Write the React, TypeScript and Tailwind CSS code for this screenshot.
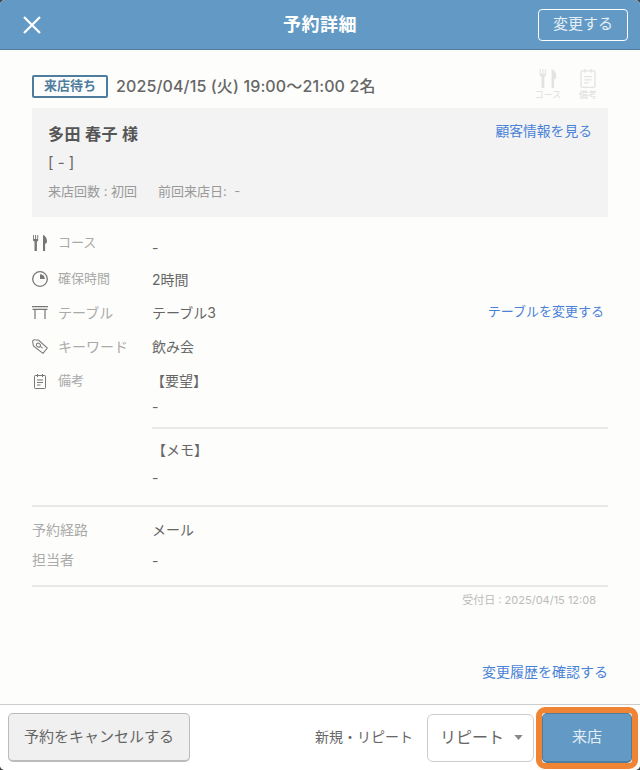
import React from 'react';

const FONT = "font-['Inter','Noto_Sans_CJK_JP',sans-serif]";

const ForkKnife: React.FC<{ className?: string }> = ({ className }) => (
  <svg viewBox="0 0 14 16" className={className} fill="currentColor">
    <path d="M0 0h.9v4h1.200V0h1v4h1.200V0h.9v4.800c0 1-.5 1.600-1.300 1.800V16H1.500V6.600C.6 6.400 0 5.800 0 4.800z" />
    <path d="M10 16V0c2.400.8 4 3 4 6.200 0 1.500-.6 2.300-1.900 2.500V16z" />
  </svg>
);

const Memo: React.FC<{ className?: string }> = ({ className }) => (
  <svg viewBox="0 0 12 15" className={className} fill="none" stroke="currentColor" strokeWidth="1">
    <rect x="0.500" y="1.500" width="11" height="13" rx="0.800" />
    <path d="M3.500 0v3M8.500 0v3M3 6h6M3 8.500h6M3 11h3.500" />
  </svg>
);

const Clock: React.FC = () => (
  <svg viewBox="0 0 16 16" className="w-4 h-4 text-[#777]">
    <circle cx="8" cy="8" r="7.300" fill="none" stroke="currentColor" strokeWidth="1.300" />
    <path d="M8 3.200A4.800 4.800 0 0 1 12.800 8H8z" fill="currentColor" />
  </svg>
);

const Table: React.FC = () => (
  <svg viewBox="0 0 16 13" className="w-4 h-[13px] text-[#777]" fill="none" stroke="currentColor" strokeWidth="1.200">
    <path d="M0 .7h16M.5 3.400h15M3 3.400V13M13 3.400V13" />
  </svg>
);

const Tag: React.FC = () => (
  <svg viewBox="0 0 17 16" className="w-4 h-[15px] text-[#777]" fill="none" stroke="currentColor" strokeWidth="1.100">
    <path d="M.7 3.200c-.2-1.400.8-2.500 2.200-2.300l4.200.5 9.200 8.300-4.600 5.600L1.500 7.400z" />
    <ellipse cx="6.800" cy="6.500" rx="2.300" ry="1.900" transform="rotate(35 6.800 6.500)" />
    <path d="M8.700 7.800l2.600 1.900" />
  </svg>
);

const Row: React.FC<{ icon?: React.ReactNode; label: string; labelClass?: string; className?: string; children: React.ReactNode }> = ({ icon, label, labelClass, className, children }) => (
  <div className={`flex items-center ${className || ''}`}>
    {icon && <div className="w-[26px] shrink-0 flex items-center justify-center pr-[10px]">{icon}</div>}
    <div className={`${icon ? 'w-[94px]' : 'w-[120px]'} shrink-0 text-[#aaa] ${labelClass || 'text-[13px]'}`}>{label}</div>
    <div className="flex-1 flex items-center justify-between text-[14px] text-[#666]">{children}</div>
  </div>
);

export default function App() {
  return (
    <div className={`w-[640px] h-[770px] bg-[#444] ${FONT}`}>
      <div className="w-full h-full rounded-[5px] overflow-hidden bg-[#fdfdfb] flex flex-col">
        <header className="h-[50px] shrink-0 bg-[#639ac5] border-b border-[#4f7d9f] flex items-center justify-between pl-[23px] pr-[12px] relative">
          <svg viewBox="0 0 18 18" className="w-[18px] h-[18px] text-white" fill="none" stroke="currentColor" strokeWidth="2.200">
            <path d="M1 1l16 16M17 1L1 17" />
          </svg>
          <h1 className="absolute left-0 right-0 text-center text-[18px] tracking-[0.5px] font-bold text-white pointer-events-none">予約詳細</h1>
          <button className="w-[90px] h-[32px] rounded-[4px] border border-white text-[15px] text-[#e4eef6]">変更する</button>
        </header>

        <main className="flex-1 px-[32px] pt-[13px] flex flex-col">
          <div className="h-[45px] flex items-center justify-between">
            <div className="flex items-center gap-[8px] mt-[1px]">
              <span className="w-[76px] h-[23px] rounded-[2px] border-2 border-[#4f7d9f] flex items-center justify-center text-[13px] font-bold text-[#4f7d9f]">来店待ち</span>
              <span className="text-[16px] tracking-[0.13px] font-medium text-[#666]">2025/04/15 (火) 19:00〜21:00 2名</span>
            </div>
            <div className="flex gap-[12px] mr-[6px] text-[#e3e3e3]">
              <div className="w-[28px] flex flex-col items-center">
                <ForkKnife className="w-[18px] h-[19px]" />
                <span className="text-[9px] leading-[14px] whitespace-nowrap text-[#ddd]">コース</span>
              </div>
              <div className="w-[28px] flex flex-col items-center">
                <Memo className="w-[16px] h-[19px]" />
                <span className="text-[9px] leading-[14px] whitespace-nowrap text-[#ddd]">備考</span>
              </div>
            </div>
          </div>

          <section className="h-[109px] bg-[#f3f3f3] px-[16px] pt-[15px] relative">
            <div className="text-[16px] leading-[22px] tracking-[0.4px] font-bold text-[#555]">多田 春子 様</div>
            <div className="text-[15px] leading-[20px] mt-[8px] text-[#666]">[ - ]</div>
            <div className="text-[13px] leading-[18px] mt-[9px] text-[#999] flex gap-[21px]">
              <span>来店回数 : 初回</span>
              <span>前回来店日:{'\u00a0\u00a0'}-</span>
            </div>
            <span className="absolute right-[16px] top-[13px] text-[13.800px] text-[#4a82d8]">顧客情報を見る</span>
          </section>

          <div className="mt-[16px] flex flex-col">
            <Row className="h-[20px]" icon={<ForkKnife className="w-[14px] h-[16px] text-[#777]" />} label="コース">
              <span className="mt-[9px]">-</span>
            </Row>
            <Row className="h-[20px] mt-[16px]" icon={<Clock />} label="確保時間">2時間</Row>
            <Row className="h-[20px] mt-[13px]" icon={<Table />} label="テーブル" labelClass="text-[14px]">
              <span>テーブル3</span>
              <span className="mr-[4px] text-[13px] text-[#4a82d8]">テーブルを変更する</span>
            </Row>
            <Row className="h-[20px] mt-[14px]" icon={<Tag />} label="キーワード" labelClass="text-[14px]">飲み会</Row>
            <Row className="h-[20px] mt-[15px]" icon={<Memo className="w-[12px] h-[15px] text-[#777]" />} label="備考">
              <span className="-ml-[1px] mb-[2px]">【要望】</span>
            </Row>
          </div>

          <div className="ml-[120px] text-[14px] text-[#666]">
            <div className="h-[37px] pt-[5px]">-</div>
            <div className="h-[2px] bg-[#e8e8e8] mt-[-1px]" />
            <div className="mt-[11px] leading-[20px]">【メモ】</div>
            <div className="mt-[8px] leading-[20px]">-</div>
          </div>

          <div className="h-[2px] bg-[#e8e8e8] mt-[17px]" />

          <Row className="h-[20px] mt-[12px]" label="予約経路" labelClass="text-[14px]">メール</Row>
          <Row className="h-[20px] mt-[10px]" label="担当者" labelClass="text-[14px]">
            <span className="mt-[2px]">-</span>
          </Row>

          <div className="h-[2px] bg-[#e8e8e8] mt-[16px]" />
          <div className="mt-[6px] pr-[12px] text-right text-[11px] leading-[15px] text-[#bbb]">受付日 : 2025/04/15 12:08</div>
          <div className="mt-auto mb-[22px] text-right text-[14px] text-[#4a82d8]">変更履歴を確認する</div>
        </main>

        <footer className="h-[66px] shrink-0 bg-white border-t border-[#ccc] flex items-center px-[8px]">
          <button className="w-[182px] h-[49px] rounded-[5px] border border-[#bbb] border-b-2 bg-[#f0f0f0] text-[15px] text-[#666]">予約をキャンセルする</button>
          <span className="ml-auto pb-[2px] text-[14px] text-[#666]">新規・リピート</span>
          <div className="ml-[14px] w-[107px] h-[48px] rounded-[6px] border border-[#ccc] bg-white flex items-center justify-between pl-[12px] pr-[10px] pb-[1px] text-[16px] text-[#666]">
            <span>リピート</span>
            <svg viewBox="0 0 10 6" className="w-[9px] h-[5px] text-[#888]" fill="currentColor"><path d="M0 0h10L5 6z" /></svg>
          </div>
          <div className="ml-[2px] mr-[-6px] w-[102px] h-[62px] rounded-[9px] border-[6px] border-[#ef8534] flex items-center justify-center">
            <button className="w-full h-full rounded-[5px] bg-[#639ac5] border border-[#4f7d9f] border-b-2 text-[15px] text-[#e4eef6]">来店</button>
          </div>
        </footer>
      </div>
    </div>
  );
}
